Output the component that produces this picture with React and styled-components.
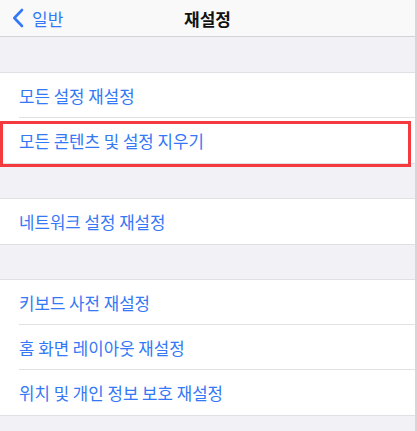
import React from "react";
import styled, { createGlobalStyle } from "styled-components";

const GlobalStyle = createGlobalStyle`
  html, body {
    margin: 0;
    padding: 0;
    background: #f2f2f7;
  }
  body {
    font-family: "Noto Sans CJK KR", "Noto Sans", sans-serif;
    -webkit-font-smoothing: antialiased;
  }
`;

const Screen = styled.div`
  width: 415px;
  height: 431px;
  background: #f1f1f6;
  border-right: 2px solid #d6d6d9;
  overflow: hidden;
`;

const NavBar = styled.header`
  height: 36px;
  background: #f9f9f9;
  border-bottom: 1px solid #d2d2d6;
  display: grid;
  grid-template-columns: 1fr auto 1fr;
  align-items: center;
`;

const BackButton = styled.a`
  display: flex;
  align-items: center;
  gap: 8px;
  padding-left: 12px;
  color: #3478f6;
  font-size: 17px;
  text-decoration: none;
`;

const Title = styled.h1`
  margin: 0;
  font-size: 17px;
  font-weight: 700;
  color: #111;
`;

const Spacer = styled.div`
  height: ${(p) => p.$h}px;
`;

const Group = styled.section`
  background: #fff;
  border-top: 1px solid #e0e0e4;
  border-bottom: 1px solid #e0e0e4;
`;

const Row = styled.div`
  position: relative;
  height: 45px;
  display: flex;
  align-items: center;
  padding-left: 19px;
  color: #3478f6;
  font-size: 16.8px;
  &:not(:last-child)::after {
    content: "";
    position: absolute;
    left: 19px;
    right: 0;
    bottom: 0;
    height: 1px;
    background: #e2e2e6;
  }
`;

const Highlight = styled.div`
  position: absolute;
  left: 0;
  top: 3px;
  width: 405px;
  height: 40px;
  border: 3px solid #f53a3f;
  pointer-events: none;
`;

const Chevron = () => (
  <svg width="12" height="20" viewBox="0 0 12 20" fill="none">
    <path
      d="M10 2 L2.3 10 L10 18"
      stroke="#3478f6"
      strokeWidth="2.6"
      strokeLinecap="round"
      strokeLinejoin="round"
    />
  </svg>
);

const groups = [
  ["모든 설정 재설정", "모든 콘텐츠 및 설정 지우기"],
  ["네트워크 설정 재설정"],
  ["키보드 사전 재설정", "홈 화면 레이아웃 재설정", "위치 및 개인 정보 보호 재설정"],
];

export default function App() {
  return (
    <>
      <GlobalStyle />
      <Screen>
        <NavBar>
          <BackButton href="#">
            <Chevron />
            일반
          </BackButton>
          <Title>재설정</Title>
          <div />
        </NavBar>
        {groups.map((items, gi) => (
          <React.Fragment key={gi}>
            <Spacer $h={gi === 0 ? 35 : 34} />
            <Group>
              {items.map((label) => (
                <Row key={label}>
                  {label}
                  {label === "모든 콘텐츠 및 설정 지우기" && <Highlight />}
                </Row>
              ))}
            </Group>
          </React.Fragment>
        ))}
      </Screen>
    </>
  );
}
